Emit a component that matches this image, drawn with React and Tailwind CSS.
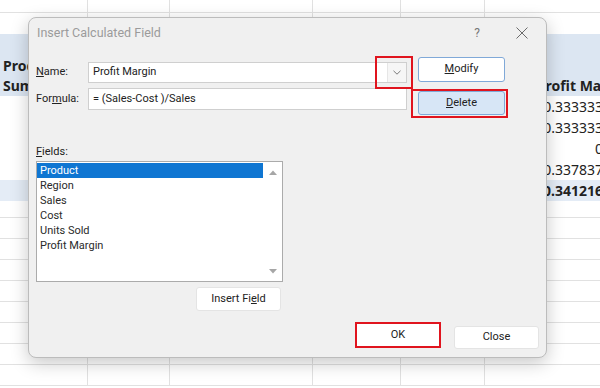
import React from "react";

const colW = ["w-[88px]", "w-[82px]", "w-[143px]", "w-[88px]", "w-[84px]", "w-[130px]"];

function GridRow({ h, bottom = true }) {
  return (
    <div className={`flex shrink-0 ${h} ${bottom ? "border-b border-[#e1e1e1]" : ""}`}>
      {colW.map((w, i) => (
        <div key={i} className={`${w} shrink-0 h-full border-r border-[#e1e1e1]`} />
      ))}
    </div>
  );
}

function DataRow({ value, total }) {
  return (
    <div className={`flex shrink-0 h-[21px] ${total ? "bg-[#e4ecf6] font-bold" : ""}`}>
      <div className="w-[88px] shrink-0" />
      <div className="w-[82px] shrink-0" />
      <div className="w-[143px] shrink-0" />
      <div className="w-[88px] shrink-0" />
      <div className="w-[84px] shrink-0" />
      <div className="w-[130px] shrink-0 flex items-center justify-end pr-[12px] leading-[21px] text-[14px] text-[#222]">
        {value}
      </div>
    </div>
  );
}

function Chevron() {
  return (
    <svg width="8" height="5" viewBox="0 0 8 5">
      <path d="M0.5 0.8 L4 4.2 L7.5 0.8" stroke="#7a7a7a" strokeWidth="1" fill="none" />
    </svg>
  );
}

function CloseX() {
  return (
    <svg width="12" height="12" viewBox="0 0 12 12">
      <path d="M0.5 0.5 L11.5 11.5 M11.5 0.5 L0.5 11.5" stroke="#6b6b6b" strokeWidth="1" fill="none" />
    </svg>
  );
}

function Tri({ up }) {
  return (
    <svg width="8" height="5" viewBox="0 0 8 5">
      {up ? <path d="M0 5 L4 0.5 L8 5 Z" fill="#a6a6a6" /> : <path d="M0 0 L4 4.5 L8 0 Z" fill="#a6a6a6" />}
    </svg>
  );
}

export default function App() {
  const fields = ["Product", "Region", "Sales", "Cost", "Units Sold", "Profit Margin"];
  return (
    <div className="relative w-[600px] h-[388px] overflow-hidden bg-white" style={{ fontFamily: "'Noto Sans', sans-serif" }}>
      {/* spreadsheet */}
      <div className="flex flex-col w-[615px]">
        <GridRow h="h-[13px]" />
        <GridRow h="h-[21px]" bottom={false} />
        <div className="flex shrink-0 h-[62px] bg-[#dce6f2] font-bold text-[14px] text-[#222] leading-[20px]">
          <div className="w-[88px] shrink-0 flex flex-col justify-end pl-[3px] overflow-hidden whitespace-nowrap">
            <div>Product</div>
            <div>Sum of Sales</div>
          </div>
          <div className="w-[82px] shrink-0" />
          <div className="w-[143px] shrink-0" />
          <div className="w-[88px] shrink-0" />
          <div className="w-[84px] shrink-0" />
          <div className="w-[130px] shrink-0 flex flex-col justify-end whitespace-nowrap overflow-hidden">
            <div>Sum of Profit Margin</div>
          </div>
        </div>
        <DataRow value="0.333333" />
        <DataRow value="0.333333" />
        <DataRow value="0" />
        <DataRow value="0.337837" />
        <DataRow value="0.341216" total />
        <GridRow h="h-[17px]" />
        <GridRow h="h-[21px]" />
        <GridRow h="h-[21px]" />
        <GridRow h="h-[21px]" />
        <GridRow h="h-[21px]" />
        <GridRow h="h-[21px]" />
        <GridRow h="h-[21px]" />
        <GridRow h="h-[21px]" />
        <GridRow h="h-[21px]" />
      </div>

      {/* dialog */}
      <div
        className="absolute left-[28px] top-[17px] w-[519px] h-[341px] rounded-[8px] border border-[#bcbcbc] bg-[#f0f0f0] shadow-[0_5px_18px_rgba(0,0,0,0.22)] flex flex-col text-[11px] text-[#222]"
        style={{ fontFamily: "Roboto, 'Noto Sans', sans-serif" }}
      >
        {/* title bar */}
        <div className="h-[30px] shrink-0 flex items-center pl-[8px] pr-[18px]">
          <span className="text-[12.5px] text-[#9b9b9b]">Insert Calculated Field</span>
          <span className="ml-auto text-[12px] text-[#777] mr-[36px]">?</span>
          <CloseX />
        </div>

        {/* name / formula */}
        <div className="flex pl-[7px]">
          <div className="w-[371px] pt-[14px] flex flex-col gap-[5px]">
            <div className="flex items-center h-[21px]">
              <div className="w-[52px] shrink-0">
                <u>N</u>ame:
              </div>
              <div className="w-[319px] h-[21px] border border-[#cfcfcf] bg-white flex items-center">
                <span className="flex-1 pl-[4px]">Profit Margin</span>
                <div className="w-[19px] h-full bg-[#f6f6f6] border-l border-[#e6e6e6] flex items-center justify-center">
                  <Chevron />
                </div>
              </div>
            </div>
            <div className="flex items-center h-[22px]">
              <div className="w-[52px] shrink-0">
                For<u>m</u>ula:
              </div>
              <div className="w-[319px] h-[22px] border border-[#cfcfcf] bg-white flex items-center pl-[4px]">
                = (Sales-Cost )/Sales
              </div>
            </div>
          </div>
          <div className="ml-[11px] pt-[9px] flex flex-col gap-[9px]">
            <div className="w-[87px] h-[25px] rounded-[3px] border border-[#80a9d8] bg-white flex items-center justify-center">
              <span>
                <u>M</u>odify
              </span>
            </div>
            <div className="w-[87px] h-[24px] rounded-[3px] border border-[#80a9d8] bg-[#d7e6f6] flex items-center justify-center">
              <span>
                <u>D</u>elete
              </span>
            </div>
          </div>
        </div>

        {/* fields */}
        <div className="pl-[7px] mt-[29px]">
          <div className="h-[15px] leading-[15px]">
            <u>F</u>ields:
          </div>
          <div className="mt-[2px] w-[247px] h-[121px] border border-[#ababab] bg-white flex">
            <div className="flex-1 pt-[1px] flex flex-col">
              {fields.map((f, i) => (
                <div
                  key={f}
                  className={`h-[15px] leading-[15px] pl-[3px] ${i === 0 ? "bg-[#0f76d2] text-white" : "text-[#2a2a2a]"}`}
                >
                  {f}
                </div>
              ))}
            </div>
            <div className="w-[19px] flex flex-col items-center justify-between pt-[8px] pb-[7px]">
              <Tri up />
              <Tri />
            </div>
          </div>
          <div className="w-[245px] flex justify-end mt-[5px]">
            <div className="w-[85px] h-[24px] rounded-[3px] border border-[#e4e4e4] bg-white flex items-center justify-center">
              <span>
                Insert Fi<u>e</u>ld
              </span>
            </div>
          </div>
        </div>

        {/* bottom buttons */}
        <div className="mt-auto flex justify-end items-start gap-[13px] pr-[7px] pb-[8px]">
          <div className="w-[86px] h-[26px] border-2 border-[#e0141e] bg-white flex items-center justify-center">OK</div>
          <div className="mt-[4px] w-[85px] h-[23px] rounded-[3px] border border-[#e4e4e4] bg-white flex items-center justify-center">
            Close
          </div>
        </div>

        {/* red annotation boxes */}
        <div className="absolute left-[346px] top-[38px] w-[38px] h-[33px] border-2 border-[#e0141e]" />
        <div className="absolute left-[382px] top-[71px] w-[97px] h-[29px] border-2 border-[#e0141e]" />
      </div>
    </div>
  );
}
